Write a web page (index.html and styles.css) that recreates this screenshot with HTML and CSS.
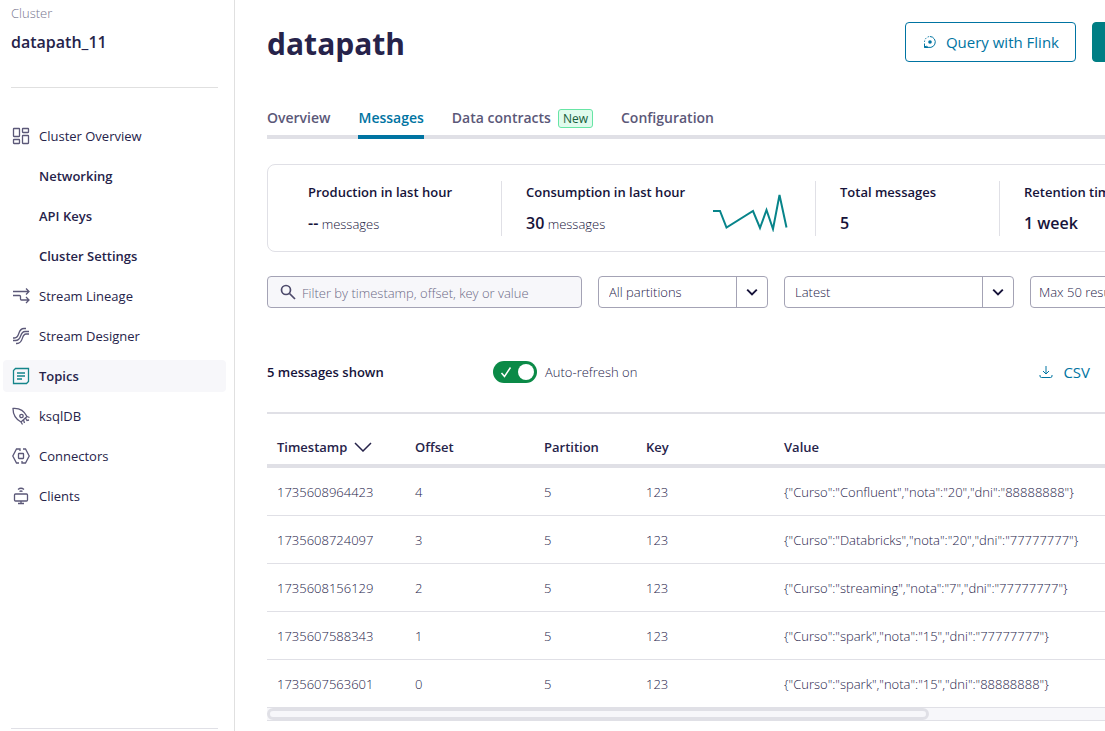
FILE: index.html
```html
<!DOCTYPE html>
<html lang="en">
<head>
    <meta charset="UTF-8">
    <meta name="viewport" content="width=device-width, initial-scale=1.0">
    <title>datapath - Messages</title>
    <link rel="stylesheet" href="styles.css">
</head>
<body>
    <aside class="sidebar">
        <div class="cluster">
            <div class="cluster-label">Cluster</div>
            <div class="cluster-name">datapath_11</div>
        </div>

        <nav class="side-nav">
            <a href="#">
                <svg viewBox="0 0 18 18"><rect x="1.500" y="1.500" width="6" height="8" rx="0.500"/><rect x="10.500" y="1.500" width="6" height="4" rx="0.500"/><rect x="1.500" y="12.500" width="6" height="4" rx="0.500"/><rect x="10.500" y="8.500" width="6" height="8" rx="0.500"/></svg>
                Cluster Overview
            </a>
            <a href="#" class="sub">Networking</a>
            <a href="#" class="sub">API Keys</a>
            <a href="#" class="sub">Cluster Settings</a>
            <a href="#">
                <svg viewBox="0 0 18 18"><path d="M1 4.500h16M14 1.500l3 3-3 3M1 8.500h6.500q1 0 1 1v2.500q0 1 1 1H17M14 10l3 3-3 3"/></svg>
                Stream Lineage
            </a>
            <a href="#">
                <svg viewBox="0 0 18 18"><path d="M1 11h1.500C8.500 11 5 1.500 12 1.500h2M1 13.500h2.500C10.500 13.500 7 4.500 13 4.500h4M4 16.500h1C12 16.500 9 7 14 7h3"/></svg>
                Stream Designer
            </a>
            <a href="#" class="active">
                <svg viewBox="0 0 18 18"><path d="M3.500 1.500H16.500V14.500L14.500 16.500H1.500V3.500ZM5 6h8M5 9h8M5 12h5"/></svg>
                Topics
            </a>
            <a href="#">
                <svg viewBox="0 0 18 18"><path d="M1 1.500C7 1 12 3.500 15 9.500L9 15C3.500 12 1 7 1 1.500ZM15 9.500l2.500 1M13.500 11l1.500 2.500 2-.5M11.500 13l1 3M9 15l1.500 2.500"/><circle cx="9.500" cy="9" r="1.700"/></svg>
                ksqlDB
            </a>
            <a href="#">
                <svg viewBox="0 0 18 18"><path d="M8 4V2H4.500L.800 9l3.700 7H7M11 2h2.500l3.700 7-3.700 7H10v-2"/><rect x="6.500" y="6.500" width="5" height="5" rx="0.500"/></svg>
                Connectors
            </a>
            <a href="#">
                <svg viewBox="0 0 18 18"><path d="M6 2.500q3-2.500 6 0M7.500 4.500q1.500-1 3 0M9 14v2.500M6 16.500h6"/><rect x="2.500" y="7" width="13" height="7" rx="1"/></svg>
                Clients
            </a>
        </nav>

        <div class="sidebar-footer"></div>
    </aside>

    <main class="main">
        <header class="page-header">
            <h1>datapath</h1>
            <div class="actions">
                <button type="button" class="btn">
                    <svg viewBox="0 0 16 16"><path d="M8 2.500A5.500 5.500 0 1 1 4 12L2.500 13.500M2.500 9.500v4h4"/><path d="M2.500 8A5.500 5.500 0 0 1 8 2.500" stroke-dasharray="1.500 1.500"/><circle class="dot" cx="8" cy="8" r="1.800"/></svg>
                    Query with Flink
                </button>
                <button type="button" class="btn btn-primary" aria-label="Actions"></button>
            </div>
        </header>

        <nav class="tabs">
            <a href="#">Overview</a>
            <a href="#" class="active">Messages</a>
            <a href="#">Data contracts <span class="badge">New</span></a>
            <a href="#">Configuration</a>
        </nav>

        <section class="stats">
            <div class="stat">
                <div class="stat-label">Production in last hour</div>
                <div class="stat-value"><b>--</b> messages</div>
            </div>
            <div class="stat stat-chart">
                <div>
                    <div class="stat-label">Consumption in last hour</div>
                    <div class="stat-value"><b>30</b> messages</div>
                </div>
                <svg class="sparkline" viewBox="0 0 76 40"><path d="M0 19H7L13.500 35.500L40 19L47 36L53.500 18L60 37L66.500 3L73.500 35.500"/></svg>
            </div>
            <div class="stat">
                <div class="stat-label">Total messages</div>
                <div class="stat-value"><b>5</b></div>
            </div>
            <div class="stat">
                <div class="stat-label">Retention time</div>
                <div class="stat-value"><b>1 week</b></div>
            </div>
        </section>

        <form class="filters">
            <label class="search">
                <svg viewBox="0 0 16 16"><circle cx="6" cy="6" r="4.500"/><path d="M9.500 9.500l5.500 5.500"/></svg>
                <input type="text" placeholder="Filter by timestamp, offset, key or value" aria-label="Filter messages">
            </label>
            <div class="select">
                <select aria-label="Partition"><option>All partitions</option></select>
                <svg viewBox="0 0 10 10"><path d="M1 3l4 4 4-4"/></svg>
            </div>
            <div class="select select-wide">
                <select aria-label="Start from"><option>Latest</option></select>
                <svg viewBox="0 0 10 10"><path d="M1 3l4 4 4-4"/></svg>
            </div>
            <div class="select select-max">
                <select aria-label="Max results"><option>Max 50 results</option></select>
                <svg viewBox="0 0 10 10"><path d="M1 3l4 4 4-4"/></svg>
            </div>
        </form>

        <div class="toolbar">
            <div class="count">5 messages shown</div>
            <label class="toggle">
                <input type="checkbox" checked>
                <span class="switch">
                    <svg viewBox="0 0 12 12"><path d="M1.500 7l3 3.500L10.500 1.500"/></svg>
                </span>
                Auto-refresh on
            </label>
            <button type="button" class="csv">
                <svg viewBox="0 0 14 14"><path d="M7 1v8M4 6l3 3 3-3M1 10v1q0 1.500 1.500 1.500h9q1.500 0 1.500-1.500V10"/></svg>
                CSV
            </button>
        </div>

        <table class="messages">
            <thead>
                <tr>
                    <th class="col-time">Timestamp <svg viewBox="0 0 18 10"><path d="M1 1l8 8 8-8"/></svg></th>
                    <th class="col-offset">Offset</th>
                    <th class="col-partition">Partition</th>
                    <th class="col-key">Key</th>
                    <th>Value</th>
                </tr>
            </thead>
            <tbody>
                <tr><td>1735608964423</td><td>4</td><td>5</td><td>123</td><td>{"Curso":"Confluent","nota":"20","dni":"88888888"}</td></tr>
                <tr><td>1735608724097</td><td>3</td><td>5</td><td>123</td><td>{"Curso":"Databricks","nota":"20","dni":"77777777"}</td></tr>
                <tr><td>1735608156129</td><td>2</td><td>5</td><td>123</td><td>{"Curso":"streaming","nota":"7","dni":"77777777"}</td></tr>
                <tr><td>1735607588343</td><td>1</td><td>5</td><td>123</td><td>{"Curso":"spark","nota":"15","dni":"77777777"}</td></tr>
                <tr><td>1735607563601</td><td>0</td><td>5</td><td>123</td><td>{"Curso":"spark","nota":"15","dni":"88888888"}</td></tr>
            </tbody>
        </table>
        <div class="scrollbar"><div class="scrollbar-thumb"></div></div>
    </main>
</body>
</html>
```
FILE: styles.css
```css
* {
    margin: 0;
    padding: 0;
    box-sizing: border-box;
}

body {
    display: flex;
    min-height: 100vh;
    background-color: #fff;
    color: #26234a;
    font-family: "Segoe UI", "Open Sans", sans-serif;
    font-size: 13px;
    line-height: 20px;
}

a {
    color: inherit;
    text-decoration: none;
}

button, input, select {
    font: inherit;
    color: inherit;
}

svg {
    flex: none;
    fill: none;
    stroke: currentColor;
}

/* Sidebar */
.sidebar {
    display: flex;
    flex-direction: column;
    flex: none;
    width: 235px;
    border-right: 1px solid #e0e0e0;
}

.cluster {
    margin: 0 16px 32px 11px;
    padding: 3px 0 33px;
    border-bottom: 1px solid #e0e0e0;
}

.cluster-label {
    color: #77768f;
    font-weight: 300;
}

.cluster-name {
    margin-top: 7px;
    font-size: 16px;
    font-weight: 600;
    line-height: 24px;
}

.side-nav {
    display: flex;
    flex-direction: column;
    gap: 8px;
    padding: 0 8px 0 3px;
}

.side-nav a {
    display: flex;
    align-items: center;
    gap: 9px;
    height: 32px;
    padding-left: 9px;
    border-radius: 4px;
}

.side-nav svg {
    width: 18px;
    height: 18px;
    color: #5b5878;
    stroke-width: 1.3;
}

.side-nav .sub {
    padding-left: 36px;
    font-weight: 600;
}

.side-nav .active {
    background-color: #f7f7fa;
    font-weight: 600;
}

.side-nav .active svg {
    color: #14858a;
}

.sidebar-footer {
    height: 3px;
    margin: auto 16px 0 11px;
    border-top: 1px solid #e0e0e6;
}

/* Main column */
.main {
    flex: 1;
    min-width: 0;
    overflow: hidden;
    padding-left: 32px;
}

.page-header {
    display: flex;
    justify-content: space-between;
    align-items: center;
    margin: 22px -27px 0 0;
}

h1 {
    padding-top: 4px;
    font-size: 30px;
    font-weight: 700;
    line-height: 36px;
}

.actions {
    display: flex;
    gap: 16px;
}

.btn {
    display: flex;
    align-items: center;
    gap: 8px;
    height: 40px;
    padding: 0 16px;
    border: 1px solid #0074a2;
    border-radius: 4px;
    background-color: #fff;
    color: #0074a2;
    font-size: 15px;
}

.btn svg {
    width: 16px;
    height: 16px;
}

.btn .dot {
    fill: currentColor;
    stroke: none;
}

.btn-primary {
    width: 40px;
    border-color: #007e84;
    background-color: #007e84;
}

.tabs {
    display: flex;
    gap: 28px;
    height: 43px;
    margin-top: 34px;
    border-bottom: 4px solid #e0e0e6;
    color: #5b5878;
    font-size: 14px;
    font-weight: 600;
}

.tabs a {
    display: flex;
    align-items: center;
    gap: 7px;
    height: 43px;
    padding-top: 4px;
    border-bottom: 4px solid transparent;
}

.tabs .active {
    border-color: #0074a2;
    color: #0074a2;
}

.badge {
    margin-top: 2px;
    padding: 0 4px;
    border: 1px solid #67e5a5;
    border-radius: 3px;
    background-color: #e0fbed;
    color: #155c3a;
    font-size: 12px;
    font-weight: 400;
    line-height: 17px;
}

.stats {
    display: grid;
    grid-template-columns: 233px 314px 184px 184px;
    height: 88px;
    margin: 25px -120px 0 0;
    padding: 16px 0;
    border: 1px solid #e0e0e6;
    border-radius: 8px;
    color: #16133a;
}

.stat {
    padding-left: 24px;
    border-left: 1px solid #e0e0e6;
}

.stat:first-child {
    padding-left: 40px;
    border-left: none;
}

.stat-chart {
    display: flex;
    justify-content: space-between;
    padding-right: 26px;
}

.stat-label {
    margin-top: 1px;
    font-weight: 600;
}

.stat-value {
    margin-top: 9px;
    font-weight: 300;
    line-height: 24px;
}

.stat-value b {
    font-size: 16px;
    font-weight: 600;
}

.sparkline {
    width: 76px;
    height: 40px;
    margin-top: 11px;
    stroke: #07848a;
    stroke-width: 2;
}

/* Filters */
.filters {
    display: flex;
    gap: 16px;
    margin-top: 24px;
}

.search {
    display: flex;
    align-items: center;
    flex: none;
    gap: 6px;
    width: 315px;
    height: 32px;
    padding: 0 12px;
    border: 1px solid #a4a3b5;
    border-radius: 4px;
    background-color: #f7f7fa;
}

.search svg {
    width: 16px;
    height: 16px;
    color: #4d4a6b;
    stroke-width: 1.7;
}

.search input {
    flex: 1;
    min-width: 0;
    padding-top: 2px;
    border: none;
    background: none;
    font-weight: 300;
    outline: none;
}

.search input::placeholder {
    color: #6c6a86;
}

.select {
    display: flex;
    align-items: center;
    position: relative;
    flex: none;
    width: 170px;
    height: 32px;
    border: 1px solid #a4a3b5;
    border-radius: 4px;
}

.select-wide {
    width: 230px;
}

.select select {
    width: 100%;
    height: 30px;
    padding: 0 42px 0 10px;
    border: none;
    background: none;
    appearance: none;
    font-weight: 300;
}

.select-max select {
    padding-left: 8px;
}

/* chevron sits over the right end of the select */
.select svg {
    position: absolute;
    top: 0;
    right: 0;
    width: 31px;
    height: 30px;
    padding: 9px;
    border-left: 1px solid #a4a3b5;
    color: #16133a;
    stroke-width: 1.6;
    pointer-events: none;
}

/* Message list */
.toolbar {
    display: flex;
    align-items: center;
    margin-top: 48px;
    padding-right: 15px;
    height: 32px;
}

.count {
    width: 226px;
    font-weight: 600;
    color: #16133a;
}

.toggle {
    display: flex;
    align-items: center;
    gap: 8px;
    font-weight: 300;
    position: relative;
}

.toggle input {
    position: absolute;
    opacity: 0;
}

.switch {
    display: flex;
    align-items: center;
    justify-content: space-between;
    width: 44px;
    height: 22px;
    padding: 0 3px 0 7px;
    border-radius: 11px;
    background-color: #0b8a47;
    color: #fff;
}

.switch svg {
    width: 12px;
    height: 12px;
    stroke-width: 1.5;
}

.switch::after {
    content: "";
    width: 16px;
    height: 16px;
    border-radius: 50%;
    background-color: #fff;
}

.csv {
    display: flex;
    align-items: center;
    gap: 10px;
    margin-left: auto;
    border: none;
    background: none;
    color: #0074a2;
    font-size: 15px;
}

.csv svg {
    width: 14px;
    height: 14px;
}

.messages {
    width: 100%;
    margin-top: 24px;
    border-top: 2px solid #e0e0e6;
    border-spacing: 0;
    table-layout: fixed;
    text-align: left;
}

.messages th {
    height: 54px;
    padding: 16px 0 0 10px;
    border-bottom: 4px solid #e0e0e6;
    font-weight: 600;
}

.messages th svg {
    width: 18px;
    height: 10px;
    margin-left: 3px;
    stroke-width: 1.5;
}

.messages td {
    height: 48px;
    padding-left: 10px;
    border-bottom: 1px solid #e0e0e6;
    font-weight: 300;
}

.messages tr:last-child td {
    height: 47px;
    padding-top: 1px;
    border-bottom: none;
}

.col-time, .col-key {
    width: 138px;
}

.col-offset {
    width: 129px;
}

.col-partition {
    width: 102px;
}

.scrollbar {
    height: 14px;
    border: solid #e0e0e6;
    border-width: 1px 0;
    background-color: #f7f7fa;
}

.scrollbar-thumb {
    width: 79%;
    height: 12px;
    border: 3px solid #e0e0e6;
    border-radius: 6px;
}
```
